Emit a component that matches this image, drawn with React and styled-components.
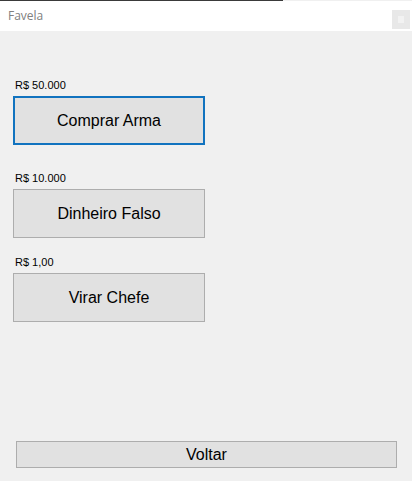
import React from "react";
import styled, { createGlobalStyle } from "styled-components";

const Global = createGlobalStyle`
  html, body {
    margin: 0;
    padding: 0;
    background: #f0f0f0;
  }
`;

const Window = styled.div`
  width: 412px;
  height: 481px;
  display: flex;
  flex-direction: column;
  background: #f0f0f0;
  font-family: "Liberation Sans", Arial, sans-serif;
  overflow: hidden;
`;

const TopLine = styled.div`
  width: 283px;
  height: 1px;
  background: #3a3a3a;
`;

const TitleBar = styled.div`
  height: 30px;
  background: #ffffff;
  display: flex;
  align-items: center;
  justify-content: space-between;
  padding: 0 2px 0 8px;
  box-sizing: border-box;
`;

const Title = styled.span`
  font-family: "Open Sans", "Noto Sans", sans-serif;
  font-size: 12px;
  color: #808080;
  margin-top: -1px;
`;

const CloseBox = styled.div`
  width: 18px;
  height: 19px;
  margin-top: 6px;
  background: #e8e8e8;
  display: flex;
  align-items: center;
  justify-content: center;
  &::after {
    content: "";
    width: 6px;
    height: 7px;
    background: #f2f2f2;
  }
`;

const Body = styled.div`
  flex: 1;
  display: flex;
  flex-direction: column;
  padding: 0 15px 13px 13px;
`;

const Group = styled.div`
  margin-top: ${(p) => p.$top}px;
  display: flex;
  flex-direction: column;
`;

const Price = styled.span`
  font-size: 11px;
  line-height: 13px;
  color: #000;
  margin-left: 2px;
  height: 13px;
`;

const ShopButton = styled.button`
  margin-top: 4px;
  width: 192px;
  height: 49px;
  box-sizing: border-box;
  background: #e1e1e1;
  border: ${(p) => (p.$focused ? "2px solid #1173bf" : "1px solid #adadad")};
  font-family: "Liberation Sans", Arial, sans-serif;
  font-size: 16px;
  color: #000;
  padding: 0;
  cursor: pointer;
`;

const BackButton = styled.button`
  margin-top: auto;
  margin-left: 3px;
  width: 381px;
  height: 27px;
  box-sizing: border-box;
  background: #e1e1e1;
  border: 1px solid #adadad;
  font-family: "Liberation Sans", Arial, sans-serif;
  font-size: 16px;
  color: #000;
  padding: 0;
`;

const items = [
  { price: "R$ 50.000", label: "Comprar Arma", top: 48, focused: true },
  { price: "R$ 10.000", label: "Dinheiro Falso", top: 27 },
  { price: "R$ 1,00", label: "Virar Chefe", top: 18 },
];

export default function App() {
  return (
    <Window>
      <Global />
      <TopLine />
      <TitleBar>
        <Title>Favela</Title>
        <CloseBox />
      </TitleBar>
      <Body>
        {items.map((it) => (
          <Group key={it.label} $top={it.top}>
            <Price>{it.price}</Price>
            <ShopButton $focused={it.focused}>{it.label}</ShopButton>
          </Group>
        ))}
        <BackButton>Voltar</BackButton>
      </Body>
    </Window>
  );
}
